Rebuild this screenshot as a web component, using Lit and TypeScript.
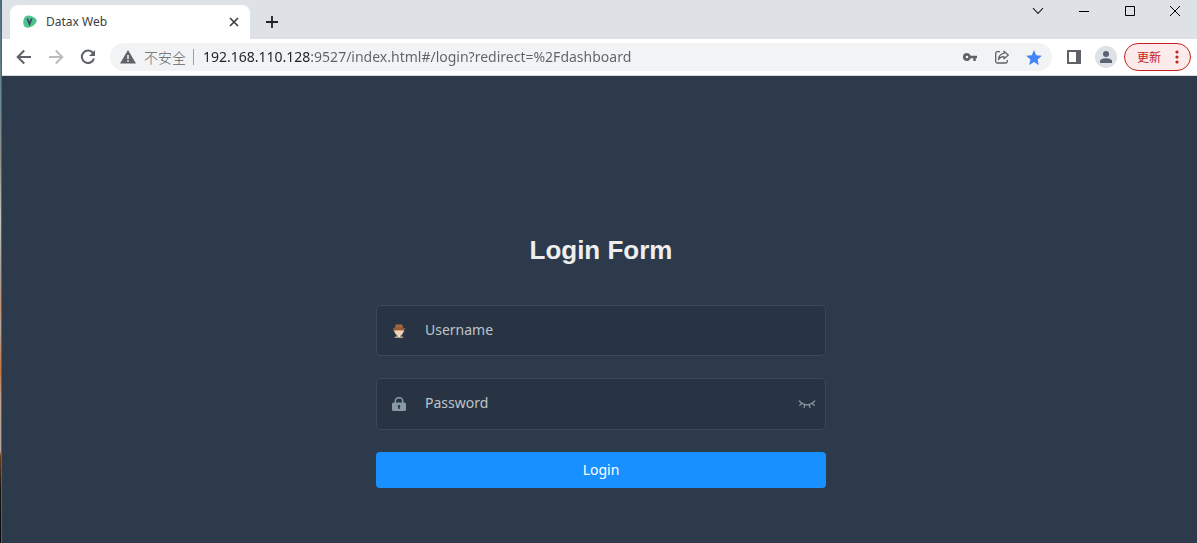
import { LitElement, html, css } from "lit";
import { customElement, state } from "lit/decorators.js";

@customElement("tab-strip")
class TabStrip extends LitElement {
  static styles = css`
    :host {
      display: flex;
      height: 39px;
      background: #dee1e6;
      padding-left: 8px;
      font-family: "Noto Sans", "Open Sans", sans-serif;
    }
    button {
      border: 0;
      padding: 0;
      background: none;
      display: grid;
      place-items: center;
    }
    svg {
      display: block;
    }
    .tab {
      box-sizing: border-box;
      width: 240px;
      height: 34px;
      margin-top: 5px;
      padding: 0 8px 0 12px;
      border-radius: 8px 8px 0 0;
      background: #fff;
      display: flex;
      align-items: center;
      gap: 8px;
    }
    .title {
      flex: 1;
      font-size: 12px;
      line-height: 16px;
      color: #3c4043;
    }
    .close {
      width: 16px;
      height: 16px;
    }
    .add {
      width: 28px;
      height: 28px;
      margin: 8px 0 0 8px;
    }
    .window {
      margin-left: auto;
      display: flex;
    }
    .window button {
      width: 46px;
      height: 22px;
    }
    .window button:last-child {
      width: 44px;
    }
  `;

  render() {
    return html`
      <div class="tab">
        <svg width="16" height="16" viewBox="0 0 16 16" aria-hidden="true">
          <path d="M3.600 2.200C5.300.9 8.200 1.400 10.400 2.500c2.400 1.200 4.800 2.900 4.200 4.900-.7 2.400-3.300 4.600-6 5.700-2.500 1-5.300.9-6.500-1.100C.8 9.800.9 4.300 3.600 2.200z" fill="#4dc48f"/>
          <path d="M5.300 4.500 7.500 10 9.700 4.500" fill="none" stroke="#34495e" stroke-width="1.800"/>
        </svg>
        <span class="title">Datax Web</span>
        <button class="close" aria-label="Close tab">
          <svg width="10" height="10" viewBox="0 0 10 10"><path d="M1 1l8 8M9 1 1 9" stroke="#3c4043" stroke-width="1.700"/></svg>
        </button>
      </div>
      <button class="add" aria-label="New tab">
        <svg width="12" height="12" viewBox="0 0 12 12"><path d="M6 0v12M0 6h12" stroke="#202124" stroke-width="1.800"/></svg>
      </button>
      <div class="window">
        <button aria-label="Search tabs">
          <svg width="12" height="8" viewBox="0 0 12 8"><path d="M1 1.200 6 6.500 11 1.200" fill="none" stroke="#222" stroke-width="1.100"/></svg>
        </button>
        <button aria-label="Minimize">
          <svg width="10" height="10" viewBox="0 0 10 10"><path d="M0 5.500h10" stroke="#000"/></svg>
        </button>
        <button aria-label="Maximize">
          <svg width="10" height="10" viewBox="0 0 10 10"><path d="M.5.5h9v9h-9z" fill="none" stroke="#000"/></svg>
        </button>
        <button aria-label="Close">
          <svg width="10" height="10" viewBox="0 0 10 10"><path d="M0 0l10 10M10 0 0 10" stroke="#000"/></svg>
        </button>
      </div>
    `;
  }
}

@customElement("address-toolbar")
class AddressToolbar extends LitElement {
  static styles = css`
    :host {
      display: flex;
      align-items: center;
      box-sizing: border-box;
      height: 37px;
      padding: 0 6px 0 8px;
      background: #fff;
      border-bottom: 1px solid #d5dbdc;
      font-family: "Noto Sans", "Open Sans", "Noto Sans CJK SC", sans-serif;
    }
    button {
      border: 0;
      padding: 0;
      background: none;
      display: grid;
      place-items: center;
      flex: none;
    }
    svg {
      display: block;
    }
    .nav {
      width: 28px;
      height: 28px;
      margin-right: 4px;
    }
    .omnibox {
      flex: 1;
      min-width: 0;
      display: flex;
      align-items: center;
      height: 28px;
      box-sizing: border-box;
      margin: 0 6px 0 4px;
      padding: 0 8px 0 10px;
      border-radius: 14px;
      background: #f1f3f4;
    }
    .security {
      display: flex;
      align-items: center;
      gap: 8px;
      padding-right: 7px;
      border-right: 1px solid #9aa0a6;
      font: 300 14px/16px "Noto Sans CJK SC", sans-serif;
      color: #5f6368;
    }
    .url {
      flex: 1;
      min-width: 0;
      height: 24px;
      margin-left: 9px;
      border: 0;
      padding: 0;
      outline: 0;
      font: 14px/24px "Noto Sans", "Open Sans", sans-serif;
      color: transparent;
      background: linear-gradient(to right, #202124 108px, #5f6368 108px);
      background-clip: text;
      -webkit-background-clip: text;
    }
    .tool {
      width: 32px;
      height: 28px;
    }
    .omnibox .tool:last-child {
      width: 20px;
      margin-left: 6px;
    }
    .avatar {
      width: 22px;
      height: 22px;
      margin: 0 7px 0 5px;
      border-radius: 50%;
      background: #dee1e6;
    }
    .update {
      box-sizing: border-box;
      width: 67px;
      height: 28px;
      border: 1px solid #c5221f;
      border-radius: 14px;
      background: #fcebea;
      color: #c5221f;
      font: 12px/16px "Noto Sans CJK SC", sans-serif;
      display: flex;
      align-items: center;
      justify-content: space-between;
      padding: 0 11px 0 12px;
    }
  `;

  render() {
    return html`
      <button class="nav" aria-label="Back">
        <svg width="16" height="16" viewBox="0 0 16 16"><path d="M15 8H2M8.200 1.500 1.700 8l6.500 6.500" fill="none" stroke="#5f6368" stroke-width="2"/></svg>
      </button>
      <button class="nav" aria-label="Forward" disabled>
        <svg width="16" height="16" viewBox="0 0 16 16"><path d="M1 8h13M7.800 1.500 14.300 8l-6.500 6.500" fill="none" stroke="#babcbe" stroke-width="2"/></svg>
      </button>
      <button class="nav" aria-label="Reload">
        <svg width="16" height="16" viewBox="0 0 16 16"><path d="M13.300 4.500A6.200 6.200 0 1 0 14 9.500" fill="none" stroke="#5f6368" stroke-width="2"/><path d="M15 1v6H9z" fill="#5f6368"/></svg>
      </button>
      <div class="omnibox">
        <div class="security">
          <svg width="16" height="14" viewBox="0 0 16 14" aria-hidden="true"><path d="M8 0 16 13.500H0z" fill="#5f6368"/><path d="M7.200 5h1.600v4H7.200zM7.200 10.200h1.600v1.600H7.200z" fill="#f1f3f4"/></svg>
          <span>不安全</span>
        </div>
        <input class="url" aria-label="Address" spellcheck="false" .value=${"192.168.110.128:9527/index.html#/login?redirect=%2Fdashboard"} />
        <button class="tool" aria-label="Passwords">
          <svg width="14" height="8" viewBox="0 0 14 8"><path fill-rule="evenodd" d="M4 0a4 4 0 1 0 3.700 5.300h2.600V8h2.500V5.300H14V2.700H7.700A4 4 0 0 0 4 0zm0 2.700a1.300 1.300 0 1 1 0 2.600 1.300 1.300 0 0 1 0-2.600z" fill="#5f6368"/></svg>
        </button>
        <button class="tool" aria-label="Share">
          <svg width="14" height="14" viewBox="0 0 14 14"><path d="M5 1.700H2.200A1.500 1.500 0 0 0 .7 3.200v8.300A1.500 1.500 0 0 0 2.200 13h8.600a1.500 1.500 0 0 0 1.500-1.500V10" fill="none" stroke="#5f6368" stroke-width="1.300"/><path d="M9 1.200 13.300 5 9 8.800V6.600C6.200 6.600 4.600 7.600 3.500 9.700 3.700 6.300 5.600 3.900 9 3.400z" fill="none" stroke="#5f6368" stroke-width="1.200" stroke-linejoin="round"/></svg>
        </button>
        <button class="tool" aria-label="Bookmark">
          <svg width="16" height="15" viewBox="0 0 16 15"><path d="M8 0l2.200 5.200 5.600.5-4.200 3.700 1.200 5.500L8 12l-4.800 2.900 1.200-5.500L.2 5.700l5.600-.5z" fill="#4285f4"/></svg>
        </button>
      </div>
      <button class="tool" aria-label="Side panel">
        <svg width="14" height="14" viewBox="0 0 14 14"><path fill-rule="evenodd" d="M0 0h14v14H0zM2 2v10h7V2z" fill="#5f6368"/></svg>
      </button>
      <button class="avatar" aria-label="Profile">
        <svg width="12" height="12" viewBox="0 0 12 12"><circle cx="6" cy="3" r="3" fill="#5a6274"/><path d="M0 12v-1.800C0 8 4 7.200 6 7.200s6 .8 6 3V12z" fill="#5a6274"/></svg>
      </button>
      <button class="update">
        <span>更新</span>
        <svg width="4" height="14" viewBox="0 0 4 14" fill="#c5221f"><circle cx="2" cy="2" r="1.600"/><circle cx="2" cy="7" r="1.600"/><circle cx="2" cy="12" r="1.600"/></svg>
      </button>
    `;
  }
}

@customElement("login-form")
class LoginForm extends LitElement {
  @state() private reveal = false;

  static styles = css`
    :host {
      display: block;
      padding: 156px 0 0 3px;
      background: #2d3a4b;
      font-family: "Noto Sans", "Open Sans", sans-serif;
    }
    form {
      max-width: 450px;
      margin: 0 auto;
    }
    h3 {
      margin: 0 0 37px;
      font: bold 26px/36px "Liberation Sans", Arial, sans-serif;
      color: #eee;
      text-align: center;
    }
    .rows {
      display: grid;
      grid-template-rows: 51px 52px 36px;
      gap: 22px;
    }
    .field {
      box-sizing: border-box;
      display: flex;
      align-items: flex-start;
      border: 1px solid #3e4957;
      border-radius: 5px;
      background: #283443;
      padding: 0 9px 0 15px;
    }
    .field svg {
      display: block;
    }
    .field label {
      margin: 18px 19px 0 0;
    }
    .field button {
      margin-top: 21px;
    }
    input {
      flex: 1;
      min-width: 0;
      height: 47px;
      padding: 0;
      border: 0;
      outline: 0;
      background: none;
      color: #fff;
      font: 14px/20px "Noto Sans", "Open Sans", sans-serif;
    }
    input::placeholder {
      color: #bfc4ca;
      opacity: 1;
    }
    button {
      border: 0;
      padding: 0;
      background: none;
    }
    .submit {
      border-radius: 4px;
      background: #1890ff;
      color: #fff;
      font: 14px/20px "Noto Sans", "Open Sans", sans-serif;
    }
  `;

  render() {
    return html`
      <form @submit=${(e: Event) => e.preventDefault()}>
        <h3>Login Form</h3>
        <div class="rows">
          <div class="field">
            <label for="user" aria-label="Username">
              <svg width="14" height="14" viewBox="0 0 14 14">
                <path d="M1.800 5h10.400v2.500L11 9 9.500 11.500h-5L3 9 1.800 7.500z" fill="#b5a595"/>
                <path d="M3.200 5.500h7.600V9L9 11.500H5L3.200 9z" fill="#f0d3b0"/>
                <path d="M2.800 4 3.700.8Q5-.2 7 .5 9-.2 10.300.8L11.200 4z" fill="#a5663f"/>
                <path d="M.8 4.200Q7 2.500 13.200 4.200 12.500 6.800 7 6.300 1.500 6.800.8 4.200z" fill="#94593a"/>
                <path d="M2.300 14q.2-1.700 2.700-2h4q2.500.3 2.700 2z" fill="#a99a8b"/>
                <path d="M5.700 11h2.600l-.4 2H6.100z" fill="#efe2d0"/>
              </svg>
            </label>
            <input id="user" type="text" placeholder="Username" />
          </div>
          <div class="field">
            <label for="pass" aria-label="Password">
              <svg width="14" height="14" viewBox="0 0 14 14">
                <path d="M3.300 6V3.900a3.700 3.200 0 0 1 7.400 0V6" fill="none" stroke="#889aa4" stroke-width="1.500"/>
                <rect y="5.500" width="14" height="8.500" rx="1.500" fill="#889aa4"/>
                <path d="M7 8a1.300 1.300 0 0 1 .7 2.400V12H6.300v-1.600A1.300 1.300 0 0 1 7 8z" fill="#283443"/>
              </svg>
            </label>
            <input id="pass" type=${this.reveal ? "text" : "password"} placeholder="Password" />
            <button type="button" aria-label="Show password" @click=${() => (this.reveal = !this.reveal)}>
              <svg width="18" height="9" viewBox="0 0 18 9"><path d="M1.300 1Q9 8.800 16.700 1M4 3.300 1.800 5.300M6.800 4.700 6 7.700M11.200 4.700 12 7.700M14 3.300 16.200 5.300" fill="none" stroke="#889aa4" stroke-width="1.200" stroke-linecap="round"/></svg>
            </button>
          </div>
          <button class="submit" type="submit">Login</button>
        </div>
      </form>
    `;
  }
}

@customElement("app-root")
class AppRoot extends LitElement {
  static styles = css`
    :host {
      display: flex;
      min-height: 100vh;
    }
    .edge {
      width: 1px;
      border-right: 1px solid #56616b;
      background: linear-gradient(#4d7180 0, #6f8b92 20%, #8f8c86 29%, #c4c2be 40%, #a9a39d 50%, #c98f6b 57%, #b9aaa0 60%, #c2733f 68%, #c0a493 74%, #b4a49a 83%, #70421b 84%, #17130f 90%, #080808 100%);
    }
    .browser {
      flex: 1;
      min-width: 0;
      display: flex;
      flex-direction: column;
    }
    login-form {
      flex: 1;
    }
  `;

  render() {
    return html`
      <div class="edge"></div>
      <main class="browser">
        <tab-strip></tab-strip>
        <address-toolbar></address-toolbar>
        <login-form></login-form>
      </main>
    `;
  }
}
